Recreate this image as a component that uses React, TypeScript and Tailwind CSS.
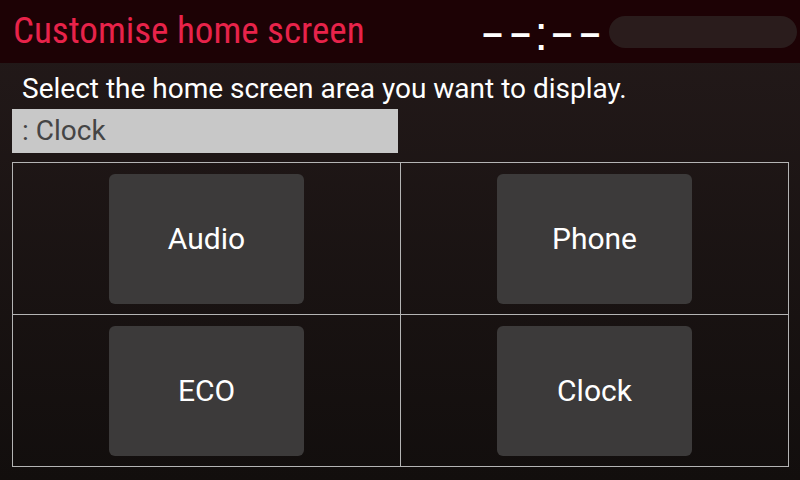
import React from "react";

const items = ["Audio", "Phone", "ECO", "Clock"];

export default function App() {
  return (
    <div className="w-[800px] h-[480px] flex flex-col bg-gradient-to-b from-[#241a1a] to-[#120e0d] font-['Roboto',sans-serif] overflow-hidden">
      <header className="h-[63px] shrink-0 bg-[#1d0205] flex items-center">
        <h1 className="ml-[13px] font-['Roboto_Condensed','Roboto',sans-serif] text-[37px] leading-none text-[#e8234a] pb-[2px]">
          Customise home screen
        </h1>
        {/* clock placeholder: --:-- */}
        <div className="ml-auto mr-[9px] mt-[3px] flex items-center font-['Liberation_Sans',sans-serif] text-white leading-none">
          <span className="text-[36px] font-bold mr-[8px]">–</span>
          <span className="text-[36px] font-bold mr-[4px]">–</span>
          <span className="text-[48px] mr-[4px] pt-[2px]">:</span>
          <span className="text-[36px] font-bold mr-[8px]">–</span>
          <span className="text-[36px] font-bold">–</span>
        </div>
        <div className="mr-[3px] w-[188px] h-[32px] rounded-full bg-[#2a1c1c]" />
      </header>

      <p className="ml-[22px] mt-[9px] text-[28px] leading-[34px] text-white">
        Select the home screen area you want to display.
      </p>
      <div className="ml-[12px] mt-[3px] w-[386px] h-[44px] bg-[#c8c8c8] flex items-center pl-[10px] text-[28px] text-[#454545]">
        : Clock
      </div>

      <div className="ml-[12px] mt-[9px] w-[777px] grid grid-cols-2 border-l border-t border-[#b4b4b4]">
        {items.map((label) => (
          <div
            key={label}
            className="h-[152px] flex items-center justify-center border-r border-b border-[#b4b4b4]"
          >
            <button className="w-[195px] h-[130px] rounded-[6px] bg-[#3c3a3a] text-white text-[30px]">
              {label}
            </button>
          </div>
        ))}
      </div>
    </div>
  );
}
